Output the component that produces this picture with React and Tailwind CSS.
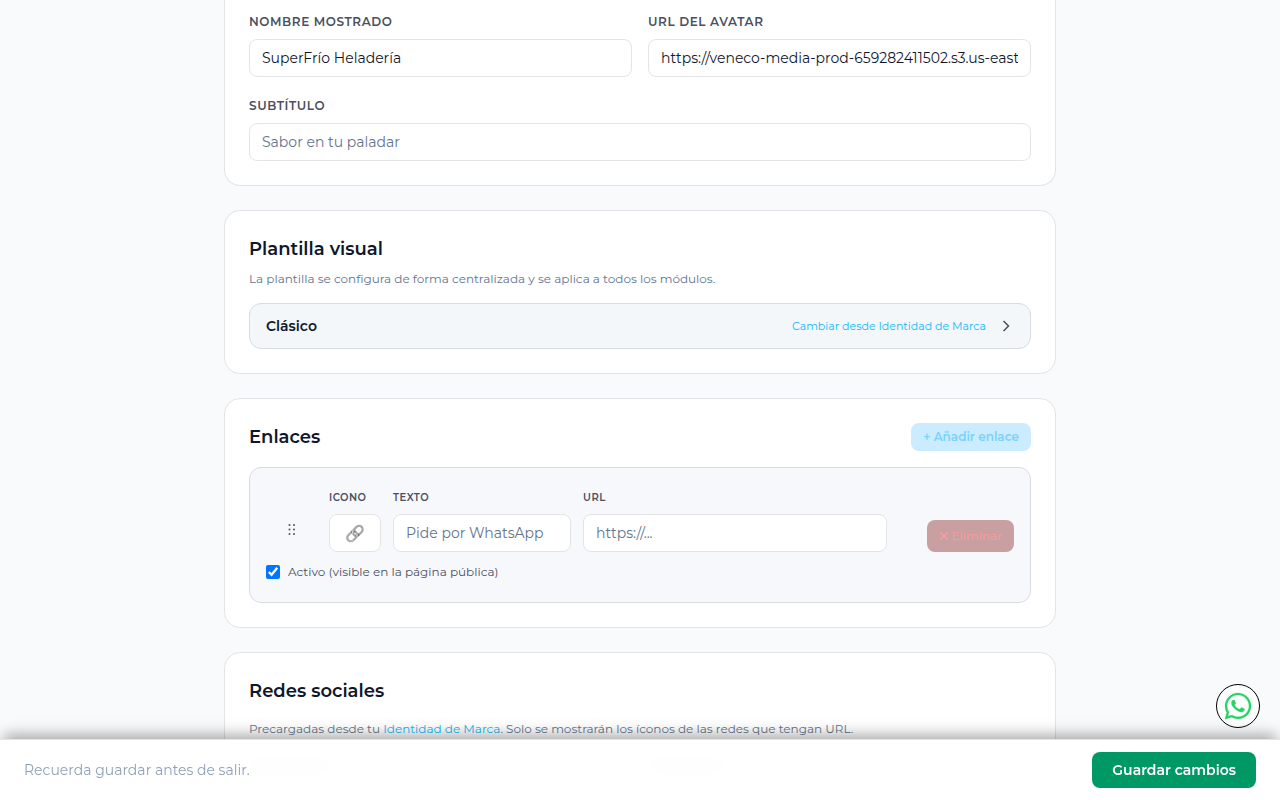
import { useState } from 'react';
import { FaWhatsapp } from 'react-icons/fa';

const inputClass = 'block w-full h-[38px] px-3 text-sm text-slate-900 bg-white border border-[#e2e4e7] rounded-lg placeholder-slate-500 focus:outline-none focus:border-sky-400';
const cardClass = 'bg-white border border-[#e2e4e7] rounded-2xl p-6';
const titleClass = 'text-lg leading-7 font-semibold text-slate-900';

const socials = [
    { id: 'instagram', label: 'Instagram' },
    { id: 'facebook', label: 'Facebook' },
];

function Field({ id, label, className, ...props }) {
    return (
        <div className={className}>
            <label htmlFor={id} className="block mb-2 text-xs leading-[18px] font-semibold tracking-wider uppercase text-[#4b5061]">
                {label}
            </label>
            <input id={id} type="text" className={inputClass} {...props} />
        </div>
    );
}

function LinkField({ id, label, inputClassName = inputClass, ...props }) {
    return (
        <div>
            <label htmlFor={id} className="block mb-2 text-[10px] leading-4 font-semibold tracking-wider uppercase text-[#4b5061]">
                {label}
            </label>
            <input id={id} type="text" className={inputClassName} {...props} />
        </div>
    );
}

function GripDots() {
    return (
        <svg width="8" height="12" viewBox="0 0 8 12" fill="currentColor" aria-hidden="true">
            {[1, 5.5, 10].map(y => (
                <g key={y}>
                    <circle cx="1.5" cy={y} r="1" />
                    <circle cx="6" cy={y} r="1" />
                </g>
            ))}
        </svg>
    );
}

function Chevron() {
    return (
        <svg width="16" height="16" viewBox="0 0 16 16" fill="none" stroke="currentColor" strokeWidth="1.5" className="text-[#4b5061]" aria-hidden="true">
            <path d="M5.5 3l5 5-5 5" />
        </svg>
    );
}

function Cross() {
    return (
        <svg width="10" height="10" viewBox="0 0 10 10" fill="none" stroke="currentColor" strokeWidth="1.2" aria-hidden="true">
            <path d="M1 1l8 8M9 1l-8 8" />
        </svg>
    );
}

export default function App() {
    const [name, setName] = useState('SuperFrío Heladería');
    const [avatar, setAvatar] = useState('https://veneco-media-prod-659282411502.s3.us-east');
    const [active, setActive] = useState(true);

    return (
        <div className="min-h-screen bg-[#f8fafc] font-[Montserrat,Inter,sans-serif] text-slate-900">
            <main className="max-w-4xl mx-auto px-8 pb-20 space-y-6">

                {/* Perfil */}
                <section className="bg-white border border-t-0 border-[#e2e4e7] rounded-b-2xl px-6 pt-[13px] pb-6">
                    <div className="grid grid-cols-2 gap-x-4 gap-y-5">
                        <Field id="name" label="Nombre mostrado" value={name} onChange={(e) => setName(e.target.value)} />
                        <Field id="avatar" label="URL del avatar" value={avatar} onChange={(e) => setAvatar(e.target.value)} />
                        <Field id="subtitle" label="Subtítulo" className="col-span-2" placeholder="Sabor en tu paladar" />
                    </div>
                </section>

                {/* Plantilla */}
                <section className={cardClass}>
                    <h2 className={titleClass}>Plantilla visual</h2>
                    <p className="mt-2 mb-4 text-xs text-slate-500">
                        La plantilla se configura de forma centralizada y se aplica a todos los módulos.
                    </p>
                    <div className="flex items-center justify-between h-[46px] px-4 bg-[#f3f7fa] border border-[#d8dde2] rounded-xl">
                        <span className="text-sm font-semibold">Clásico</span>
                        <a href="#marca" className="flex items-center gap-3 text-[11px] text-[#0fb9f8]">
                            Cambiar desde Identidad de Marca
                            <Chevron />
                        </a>
                    </div>
                </section>

                {/* Enlaces */}
                <section className={cardClass}>
                    <div className="flex items-center justify-between mb-4">
                        <h2 className={titleClass}>Enlaces</h2>
                        <button type="button" className="h-7 px-3 rounded-lg bg-[#caecfe] text-xs font-semibold text-[#79d2fb]">
                            + Añadir enlace
                        </button>
                    </div>
                    <div className="px-4 py-[22px] bg-[#f6f8fc] border border-[#d8dde2] rounded-xl">
                        <div className="grid grid-cols-[51px_52px_178fr_304fr_115px] items-end gap-3">
                            <button type="button" aria-label="Mover enlace" className="flex items-center justify-center h-11 text-slate-600 cursor-grab">
                                <GripDots />
                            </button>
                            <LinkField
                                id="link-icon"
                                label="Icono"
                                defaultValue="🔗"
                                inputClassName="block w-full h-[38px] text-center text-base bg-white border border-[#e2e4e7] rounded-lg grayscale"
                            />
                            <LinkField id="link-text" label="Texto" placeholder="Pide por WhatsApp" />
                            <LinkField id="link-url" label="URL" placeholder="https://..." />
                            <button type="button" className="justify-self-end flex items-center gap-[3px] h-8 px-3 rounded-lg bg-[#c8a0a2] text-xs text-[#ff9a9c]">
                                <Cross />
                                Eliminar
                            </button>
                        </div>
                        <label className="flex items-center gap-2 mt-3 text-xs text-[#4b5061]">
                            <input type="checkbox" className="size-[14px]" checked={active} onChange={(e) => setActive(e.target.checked)} />
                            Activo (visible en la página pública)
                        </label>
                    </div>
                </section>

                {/* Redes sociales */}
                <section className={cardClass}>
                    <h2 className={titleClass}>Redes sociales</h2>
                    <p className="mt-4 mb-5 text-xs text-slate-500">
                        Precargadas desde tu <a href="#marca" className="text-[#0fb9f8]">Identidad de Marca</a>. Solo se mostrarán los íconos de las redes que tengan URL.
                    </p>
                    <div className="grid grid-cols-2 gap-4">
                        {socials.map(social => (
                            <Field key={social.id} id={social.id} label={social.label} />
                        ))}
                    </div>
                </section>
            </main>

            <a
                href="#whatsapp"
                aria-label="WhatsApp"
                className="fixed right-5 bottom-[72px] flex items-center justify-center size-11 rounded-full bg-white border border-black text-[#25d366]"
            >
                <FaWhatsapp size={30} strokeWidth={4} stroke="currentColor" />
            </a>

            {/* Barra de guardado */}
            <div className="fixed inset-x-0 bottom-0 flex items-center justify-between px-6 py-3 bg-white/95 backdrop-blur-sm border-t border-[#e2e4e7] shadow-[0_-8px_14px_-4px_rgba(0,0,0,0.35)]">
                <p className="text-sm text-slate-400">Recuerda guardar antes de salir.</p>
                <button type="button" className="h-9 px-5 rounded-lg bg-[#009966] text-sm font-semibold text-white">
                    Guardar cambios
                </button>
            </div>
        </div>
    );
}
